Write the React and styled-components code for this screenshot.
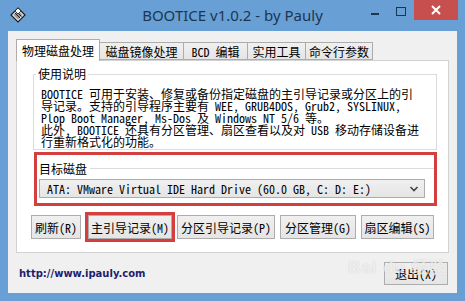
import React from 'react';
import styled, { createGlobalStyle } from 'styled-components';

const CJK = `"Noto Sans Mono CJK SC", "Noto Sans CJK SC", "Liberation Mono", monospace`;

const GlobalStyle = createGlobalStyle`
  html, body {
    margin: 0;
    padding: 0;
    background: #68a0d5;
  }
`;

const Window = styled.div`
  width: 465px;
  height: 301px;
  box-sizing: border-box;
  padding: 0 8px 8px;
  background: #68a0d5;
  display: flex;
  flex-direction: column;
  overflow: hidden;
  position: relative;
`;

const TitleBar = styled.div`
  height: 31px;
  display: grid;
  grid-template-columns: 1fr auto 1fr;
  align-items: start;
`;

const AppIcon = styled.svg`
  margin: 7px 0 0 2px;
`;

const Title = styled.div`
  font-family: "Noto Sans", "Open Sans", sans-serif;
  font-size: 15px;
  line-height: 20px;
  margin-top: 5px;
  color: #1d3650;
  white-space: nowrap;
`;

const Controls = styled.div`
  display: flex;
  justify-content: flex-end;
  margin-right: -1px;
`;

const CtrlButton = styled.div`
  width: ${p => p.$w}px;
  height: 20px;
  display: flex;
  align-items: center;
  justify-content: center;
  background: ${p => (p.$close ? '#c7504f' : 'transparent')};
`;

const Client = styled.div`
  flex: 1;
  background: #f0f0f0;
  padding: 8px 9px 0 8px;
  display: flex;
  flex-direction: column;
`;

const TabStrip = styled.div`
  height: 21px;
  display: flex;
  align-items: flex-end;
`;

const Tab = styled.div`
  position: relative;
  z-index: ${p => (p.$active ? 1 : 0)};
  width: ${p => p.$w}px;
  height: ${p => (p.$active ? 22 : 18)}px;
  margin-bottom: ${p => (p.$active ? -1 : 0)}px;
  margin-left: ${p => (p.$first ? 0 : -1)}px;
  box-sizing: border-box;
  border: 1px solid #acacac;
  border-bottom: ${p => (p.$active ? 'none' : '1px solid #acacac')};
  background: ${p => (p.$active ? '#ffffff' : 'linear-gradient(#f0f0f0, #e5e5e5)')};
  font-family: ${CJK};
  font-size: 12px;
  color: #000;
  display: flex;
  align-items: center;
  justify-content: center;
  padding-bottom: ${p => (p.$active ? 1 : 0)}px;
  white-space: nowrap;
`;

const Panel = styled.div`
  width: 433px;
  height: 193px;
  box-sizing: border-box;
  border: 1px solid #d2d2d2;
  background: #ffffff;
  padding: 6px 14px 0 14px;
  display: flex;
  flex-direction: column;
`;

const GroupBox = styled.fieldset`
  margin: 0 0 0 2px;
  width: 404px;
  box-sizing: border-box;
  border: 1px solid #dcdcdc;
  padding: 7px 0 1px 7px;
  min-width: 0;
`;

const Legend = styled.legend`
  font-family: ${CJK};
  font-size: 12px;
  line-height: 14px;
  padding: 0 2px;
  margin-left: -5px;
  color: #000;
`;

const TextLine = styled.div`
  font-family: ${CJK};
  font-size: 12px;
  line-height: 12px;
  height: 12px;
  white-space: nowrap;
  color: #000;
`;

const Highlight = styled.div`
  margin: 2px 0 0 3px;
  width: 403px;
  height: 54px;
  box-sizing: border-box;
  border: 3px solid #d33e3f;
  padding: 6px 0 0 2px;
  display: flex;
  flex-direction: column;
`;

const GroupTitle = styled.div`
  display: flex;
  align-items: center;
  height: 14px;
  font-family: ${CJK};
  font-size: 12px;
  color: #000;

  &::after {
    content: '';
    flex: 1;
    height: 1px;
    background: #dcdcdc;
    margin-left: 3px;
  }
`;

const ComboBox = styled.div`
  margin-top: 4px;
  width: 386px;
  height: 19px;
  box-sizing: border-box;
  border: 1px solid #acacac;
  background: linear-gradient(#f0f0f0, #e5e5e5);
  display: flex;
  align-items: center;
  justify-content: space-between;
  padding: 0 5px 0 7px;
  font-family: ${CJK};
  font-size: 12px;
  color: #000;
  white-space: nowrap;
`;

const ButtonRow = styled.div`
  margin-top: 9px;
  display: flex;
  gap: 5px;
`;

const Button = styled.div`
  flex-shrink: 0;
  width: ${p => p.$w}px;
  height: ${p => p.$h || 24}px;
  margin-left: ${p => (p.$marked ? 2 : 0)}px;
  box-sizing: border-box;
  border: 1px solid #adadad;
  background: linear-gradient(#f0f0f0, #e5e5e5);
  outline: ${p => (p.$marked ? '3px solid #d33e3f' : 'none')};
  font-family: ${CJK};
  font-size: 12px;
  color: #000;
  display: flex;
  align-items: center;
  justify-content: center;
  white-space: nowrap;
`;

const Footer = styled.div`
  flex: 1;
  display: flex;
  align-items: center;
  justify-content: space-between;
  padding: 1px 0 0 3px;
`;

const Link = styled.span`
  font-family: "DejaVu Sans", Verdana, sans-serif;
  font-weight: bold;
  font-size: 10px;
  color: #1e1e6e;
`;

const Watermark = styled.div`
  position: absolute;
  left: 348px;
  top: 256px;
  font-family: "Liberation Sans", Arial, sans-serif;
  font-weight: bold;
  font-size: 17px;
  color: rgba(255, 255, 255, 0.7);
  text-shadow: 0 0 1px rgba(140, 140, 140, 0.45);
  pointer-events: none;
  letter-spacing: 1px;
`;

const tabs = [
  { label: '物理磁盘处理', w: 84, active: true },
  { label: '磁盘镜像处理', w: 85 },
  { label: 'BCD 编辑', w: 65 },
  { label: '实用工具', w: 59 },
  { label: '命令行参数', w: 68 },
];

const lines = [
  'BOOTICE 可用于安装、修复或备份指定磁盘的主引导记录或分区上的引',
  '导记录。支持的引导程序主要有 WEE, GRUB4DOS, Grub2, SYSLINUX,',
  'Plop Boot Manager, Ms-Dos 及 Windows NT 5/6 等。',
  '此外, BOOTICE 还具有分区管理、扇区查看以及对 USB 移动存储设备进',
  '行重新格式化的功能。',
];

const buttons = [
  { label: '刷新(R)', w: 50 },
  { label: '主引导记录(M)', w: 84, marked: true },
  { label: '分区引导记录(P)', w: 98 },
  { label: '分区管理(G)', w: 76 },
  { label: '扇区编辑(S)', w: 73 },
];

const App = () => (
  <Window>
    <GlobalStyle />
    <TitleBar>
      <AppIcon width="16" height="16" viewBox="0 0 16 16">
        <polygon points="8,1 15,8 8,15 1,8" fill="#e8e8e8" stroke="#1a1a1a" strokeWidth="1.2" />
        <polygon points="8,3.5 12.5,8 8,12.5 3.5,8" fill="#9a9a9a" />
        <line x1="5" y1="6" x2="10" y2="11" stroke="#1a1a1a" strokeWidth="1" />
        <line x1="6.5" y1="4.5" x2="11.5" y2="9.5" stroke="#1a1a1a" strokeWidth="1" />
        <polygon points="8,1 11,4 8,7 5,4" fill="#ffffff" stroke="#1a1a1a" strokeWidth="0.8" />
      </AppIcon>
      <Title>BOOTICE v1.0.2 - by Pauly</Title>
      <Controls>
        <CtrlButton $w={26}>
          <svg width="26" height="20" viewBox="0 0 26 20">
            <rect x="9" y="13" width="8" height="2" fill="#1d3650" />
          </svg>
        </CtrlButton>
        <CtrlButton $w={26}>
          <svg width="26" height="20" viewBox="0 0 26 20">
            <rect x="8.5" y="7.5" width="9" height="8" fill="none" stroke="#1d3650" />
          </svg>
        </CtrlButton>
        <CtrlButton $w={44} $close>
          <svg width="12" height="10" viewBox="0 0 12 10">
            <path d="M2 1 L10 9 M10 1 L2 9" stroke="#ffffff" strokeWidth="2" />
          </svg>
        </CtrlButton>
      </Controls>
    </TitleBar>

    <Client>
      <TabStrip>
        {tabs.map((t, i) => (
          <Tab key={t.label} $w={t.w} $active={t.active} $first={i === 0}>
            {t.label}
          </Tab>
        ))}
      </TabStrip>
      <Panel>
        <GroupBox>
          <Legend>使用说明</Legend>
          {lines.map(l => (
            <TextLine key={l}>{l}</TextLine>
          ))}
        </GroupBox>
        <Highlight>
          <GroupTitle>目标磁盘</GroupTitle>
          <ComboBox>
            <span>ATA: VMware Virtual IDE Hard Drive (60.0 GB, C: D: E:)</span>
            <svg width="10" height="8" viewBox="0 0 10 8">
              <path d="M1.5 2 L5 5.5 L8.5 2" fill="none" stroke="#444" strokeWidth="1.6" />
            </svg>
          </ComboBox>
        </Highlight>
        <ButtonRow>
          {buttons.map(b => (
            <Button key={b.label} $w={b.w} $marked={b.marked}>
              {b.label}
            </Button>
          ))}
        </ButtonRow>
      </Panel>
      <Footer>
        <Link>http://www.ipauly.com</Link>
        <Button $w={64} $h={23}>退出(X)</Button>
      </Footer>
    </Client>
    <Watermark>Bai du 经验</Watermark>
  </Window>
);

export default App;
